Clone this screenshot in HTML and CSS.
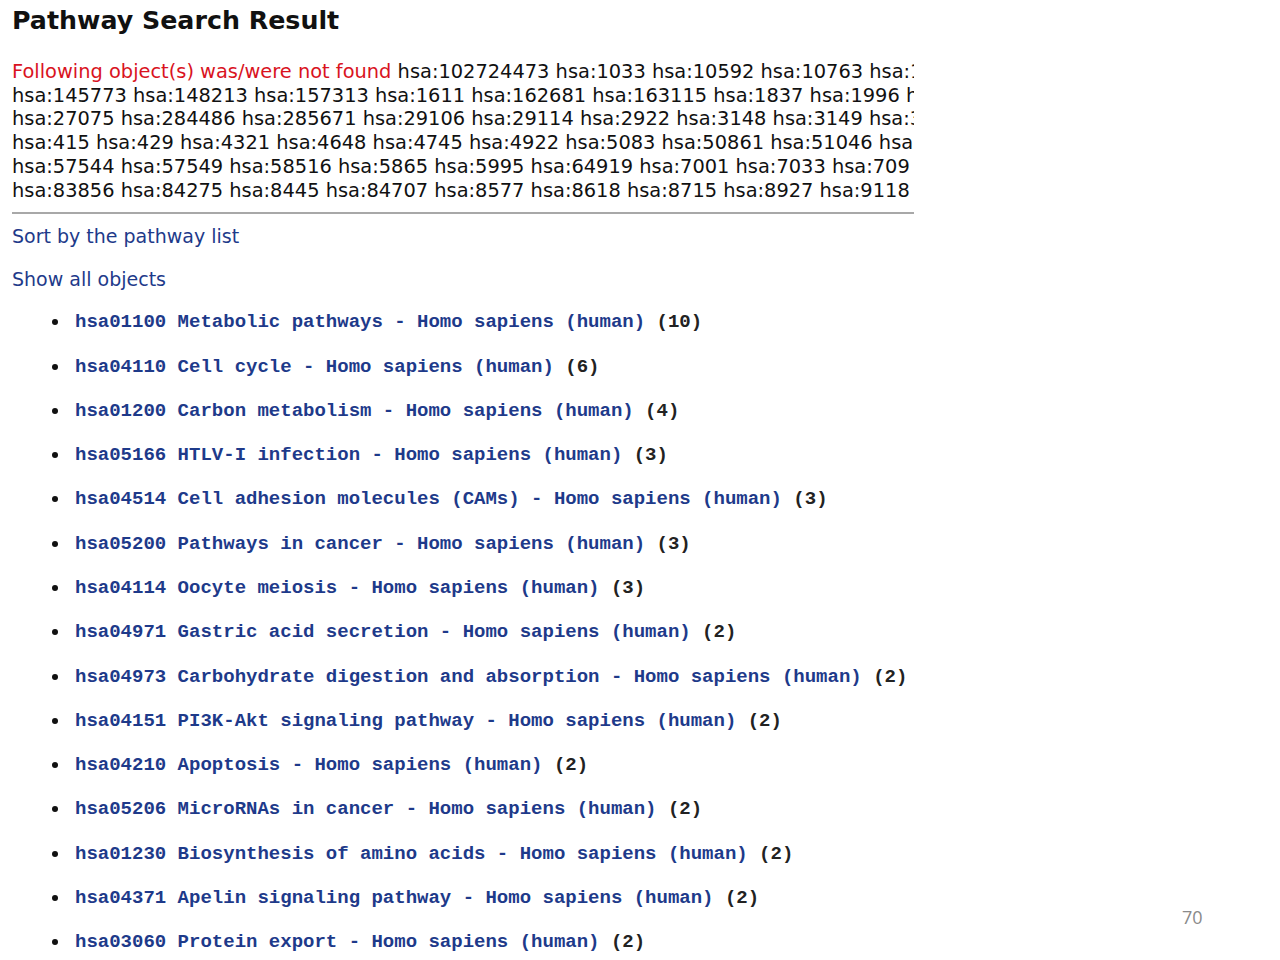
FILE: index.html
```html
<!DOCTYPE html>
<html>
<head>
<meta charset="utf-8">
<title>Pathway Search Result</title>
<link rel="stylesheet" href="styles.css">
</head>
<body>
<div class="page">
  <h1 class="title">Pathway Search Result</h1>
  <div class="notfound">
    <div class="idline"><span class="warn">Following object(s) was/were not found</span> hsa:102724473 hsa:1033 hsa:10592 hsa:10763 hsa:1</div>
    <div class="idline">hsa:145773 hsa:148213 hsa:157313 hsa:1611 hsa:162681 hsa:163115 hsa:1837 hsa:1996 h</div>
    <div class="idline">hsa:27075 hsa:284486 hsa:285671 hsa:29106 hsa:29114 hsa:2922 hsa:3148 hsa:3149 hsa:3</div>
    <div class="idline">hsa:415 hsa:429 hsa:4321 hsa:4648 hsa:4745 hsa:4922 hsa:5083 hsa:50861 hsa:51046 hsa</div>
    <div class="idline">hsa:57544 hsa:57549 hsa:58516 hsa:5865 hsa:5995 hsa:64919 hsa:7001 hsa:7033 hsa:709</div>
    <div class="idline">hsa:83856 hsa:84275 hsa:8445 hsa:84707 hsa:8577 hsa:8618 hsa:8715 hsa:8927 hsa:9118</div>
  </div>
  <hr class="rule">
  <a class="navlink sort" href="#">Sort by the pathway list</a>
  <a class="navlink show" href="#">Show all objects</a>
  <ul class="pathways">
    <li><a href="#">hsa01100 Metabolic pathways - Homo sapiens (human)</a> (10)</li>
    <li><a href="#">hsa04110 Cell cycle - Homo sapiens (human)</a> (6)</li>
    <li><a href="#">hsa01200 Carbon metabolism - Homo sapiens (human)</a> (4)</li>
    <li><a href="#">hsa05166 HTLV-I infection - Homo sapiens (human)</a> (3)</li>
    <li><a href="#">hsa04514 Cell adhesion molecules (CAMs) - Homo sapiens (human)</a> (3)</li>
    <li><a href="#">hsa05200 Pathways in cancer - Homo sapiens (human)</a> (3)</li>
    <li><a href="#">hsa04114 Oocyte meiosis - Homo sapiens (human)</a> (3)</li>
    <li><a href="#">hsa04971 Gastric acid secretion - Homo sapiens (human)</a> (2)</li>
    <li><a href="#">hsa04973 Carbohydrate digestion and absorption - Homo sapiens (human)</a> (2)</li>
    <li><a href="#">hsa04151 PI3K-Akt signaling pathway - Homo sapiens (human)</a> (2)</li>
    <li><a href="#">hsa04210 Apoptosis - Homo sapiens (human)</a> (2)</li>
    <li><a href="#">hsa05206 MicroRNAs in cancer - Homo sapiens (human)</a> (2)</li>
    <li><a href="#">hsa01230 Biosynthesis of amino acids - Homo sapiens (human)</a> (2)</li>
    <li><a href="#">hsa04371 Apelin signaling pathway - Homo sapiens (human)</a> (2)</li>
    <li><a href="#">hsa03060 Protein export - Homo sapiens (human)</a> (2)</li>
  </ul>
</div>
<div class="pagenum">70</div>
</body>
</html>
```
FILE: styles.css
```css
html, body {
  margin: 0;
  padding: 0;
  background: #ffffff;
  height: 960px;
  overflow: hidden;
}
body {
  font-family: "DejaVu Sans", Verdana, sans-serif;
  color: #000;
  position: relative;
}
.page {
  width: 902px;
  padding-left: 12px;
  overflow: hidden;
}
.title {
  margin: 0;
  padding-top: 6px;
  font-size: 25.3px;
  line-height: 30px;
  font-weight: bold;
  color: #111;
}
.notfound {
  margin-top: 24px;
  font-size: 19.4px;
  line-height: 23.7px;
  color: #111;
}
.idline {
  white-space: nowrap;
  overflow: hidden;
}
.warn {
  color: #d9131e;
}
.rule {
  margin: 10px 0 0 0;
  border: 0;
  height: 2px;
  background: #a8a8a8;
}
.navlink {
  display: block;
  font-size: 19px;
  line-height: 24px;
  color: #1e3a8a;
  text-decoration: none;
}
.sort {
  margin-top: 10px;
}
.show {
  margin-top: 19px;
}
.pathways {
  margin: 19px 0 0 0;
  padding-left: 63px;
  list-style: none;
  font-family: "Liberation Mono", "Courier New", monospace;
  font-weight: bold;
  font-size: 19px;
  color: #222;
}
.pathways li {
  line-height: 24px;
  margin-bottom: 20.3px;
  white-space: nowrap;
}
.pathways li::before {
  content: "";
  display: inline-block;
  width: 6px;
  height: 6px;
  border-radius: 50%;
  background: #111;
  margin-left: -23px;
  margin-right: 17px;
  vertical-align: middle;
}
.pathways a {
  color: #1e3a8a;
  text-decoration: none;
}
.pagenum {
  position: absolute;
  left: 1182px;
  top: 905px;
  font-family: "Open Sans", "Liberation Sans", sans-serif;
  font-size: 18px;
  line-height: 24px;
  color: #8a8a8a;
}
```
